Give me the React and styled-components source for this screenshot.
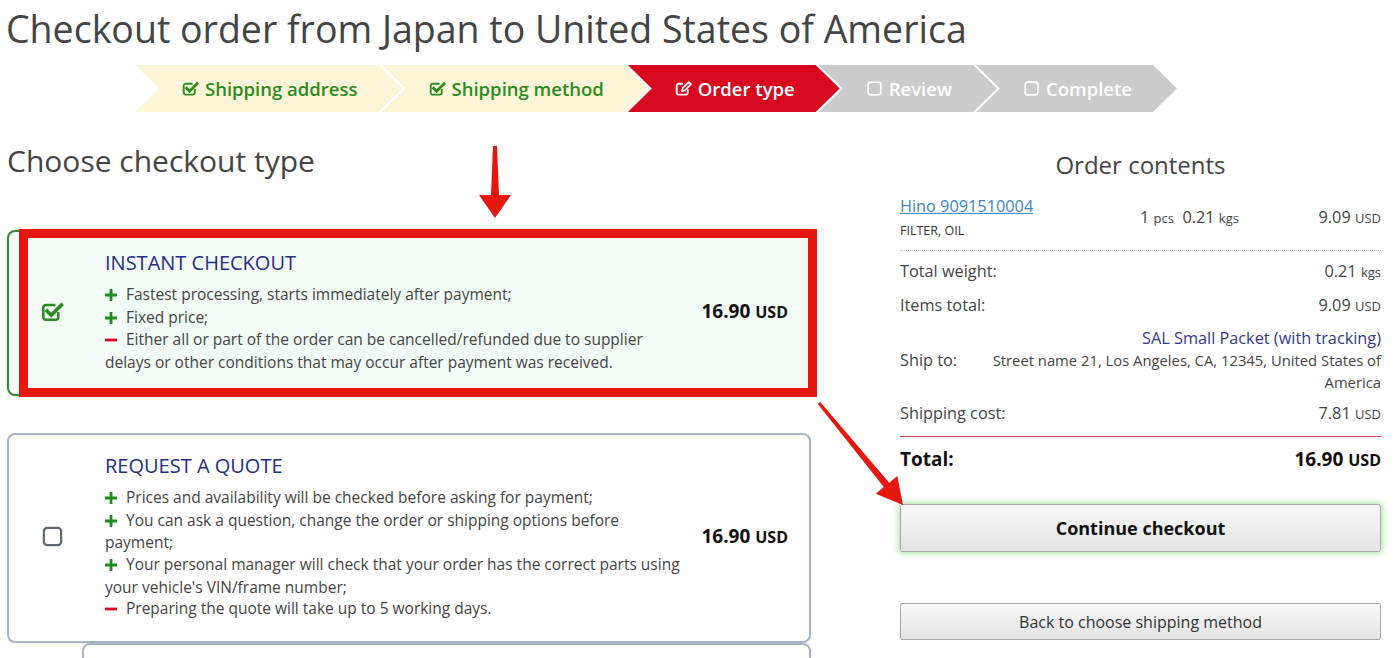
import React from 'react';
import styled, { createGlobalStyle } from 'styled-components';

const GlobalStyle = createGlobalStyle`
  html, body {
    margin: 0;
    padding: 0;
    background: #fff;
  }
  body {
    font-family: 'Open Sans', 'Liberation Sans', sans-serif;
    color: #444;
  }
`;

const steps = [
  { label: 'Shipping address', state: 'done' },
  { label: 'Shipping method', state: 'done' },
  { label: 'Order type', state: 'active' },
  { label: 'Review', state: 'todo' },
  { label: 'Complete', state: 'todo' },
];

const stepColors = {
  done: { bg: '#fdf5d8', fg: '#2c8a22' },
  active: { bg: '#d8091f', fg: '#fff' },
  todo: { bg: '#cbcbcb', fg: '#fff' },
};

const CheckSquareIcon = ({ size = 16 }) => (
  <svg width={size} height={size} viewBox="0 0 20 20" fill="none" stroke="currentColor">
    <path d="M15 10.5v4.5a2.2 2.2 0 0 1-2.2 2.2H4.2A2.2 2.2 0 0 1 2 15V6.6a2.2 2.2 0 0 1 2.2-2.2h8.3" strokeWidth="2.2" />
    <path d="M5.3 9.6l3.6 3.6 8.8-8.8" strokeWidth="3.2" strokeLinecap="square" />
  </svg>
);

const EditIcon = ({ size = 16 }) => (
  <svg width={size} height={size} viewBox="0 0 20 20" fill="none" stroke="currentColor">
    <path d="M15 11v4a2.2 2.2 0 0 1-2.2 2.2H4.2A2.2 2.2 0 0 1 2 15V6.6a2.2 2.2 0 0 1 2.2-2.2h5.3" strokeWidth="2.2" />
    <path d="M8 13.2l1-3.6 7.2-7.2 2.6 2.6-7.2 7.2z" strokeWidth="2" strokeLinejoin="round" />
  </svg>
);

const SquareIcon = ({ size = 16 }) => (
  <svg width={size} height={size} viewBox="0 0 20 20" fill="none" stroke="currentColor">
    <rect x="2.5" y="2.5" width="15" height="15" rx="3" strokeWidth="1.9" />
  </svg>
);

const Plus = () => (
  <svg width="12" height="12" viewBox="0 0 12 12">
    <path d="M4.6 0h2.8v4.6H12v2.8H7.4V12H4.6V7.4H0V4.6h4.6z" fill="#1f8a1f" />
  </svg>
);

const Minus = () => (
  <svg width="12" height="12" viewBox="0 0 12 12">
    <rect x="0" y="4.6" width="12" height="2.8" fill="#d60a22" />
  </svg>
);

const options = [
  {
    title: 'INSTANT CHECKOUT',
    selected: true,
    points: [
      ['+', 'Fastest processing, starts immediately after payment;'],
      ['+', 'Fixed price;'],
      ['-', 'Either all or part of the order can be cancelled/refunded due to supplier delays or other conditions that may occur after payment was received.'],
    ],
  },
  {
    title: 'REQUEST A QUOTE',
    selected: false,
    points: [
      ['+', 'Prices and availability will be checked before asking for payment;'],
      ['+', 'You can ask a question, change the order or shipping options before payment;'],
      ['+', "Your personal manager will check that your order has the correct parts using your vehicle's VIN/frame number;"],
      ['-', 'Preparing the quote will take up to 5 working days.'],
    ],
  },
];

export default function App() {
  return (
    <Page>
      <GlobalStyle />
      <Title>Checkout order from Japan to United States of America</Title>
      <StepBar>
        {steps.map((s) => (
          <Step key={s.label} $state={s.state}>
            {s.state === 'done' && <CheckSquareIcon size={17} />}
            {s.state === 'active' && <EditIcon size={17} />}
            {s.state === 'todo' && <SquareIcon size={17} />}
            {s.label}
          </Step>
        ))}
      </StepBar>

      <Main>
        <LeftColumn>
          <SectionTitle>Choose checkout type</SectionTitle>
          <CardList>
            {options.map((o) => (
              <CardWrap key={o.title}>
                <Card $selected={o.selected}>
                  <CheckCell $selected={o.selected}>
                    {o.selected ? <CheckSquareIcon size={23} /> : <SquareIcon size={23} />}
                  </CheckCell>
                  <CardBody>
                    <CardTitle>{o.title}</CardTitle>
                    {o.points.map(([sign, text]) => (
                      <Point key={text}>
                        <Sign>{sign === '+' ? <Plus /> : <Minus />}</Sign>
                        {text}
                      </Point>
                    ))}
                  </CardBody>
                  <Price>
                    16.90 <small>USD</small>
                  </Price>
                </Card>
                {o.selected && <Highlight />}
              </CardWrap>
            ))}
            <NextCard />
          </CardList>
        </LeftColumn>

        <RightColumn>
          <OrderTitle>Order contents</OrderTitle>
          <ItemRow>
            <div>
              <PartLink href="#">Hino 9091510004</PartLink>
              <PartName>FILTER, OIL</PartName>
            </div>
            <Qty>
              1 <Unit>pcs</Unit>&nbsp; 0.21 <Unit>kgs</Unit>
            </Qty>
            <Amount>
              9.09 <Unit>USD</Unit>
            </Amount>
          </ItemRow>
          <SumRow $first>
            <span>Total weight:</span>
            <Amount>
              0.21 <Unit>kgs</Unit>
            </Amount>
          </SumRow>
          <SumRow>
            <span>Items total:</span>
            <Amount>
              9.09 <Unit>USD</Unit>
            </Amount>
          </SumRow>
          <ShipBlock>
            <Method>SAL Small Packet (with tracking)</Method>
            <ShipTo>
              <span>Ship to:</span>
              <Address>Street name 21, Los Angeles, CA, 12345, United States of America</Address>
            </ShipTo>
          </ShipBlock>
          <SumRow $underline>
            <span>Shipping cost:</span>
            <Amount>
              7.81 <Unit>USD</Unit>
            </Amount>
          </SumRow>
          <TotalRow>
            <span>Total:</span>
            <span>
              16.90 <small>USD</small>
            </span>
          </TotalRow>
          <PrimaryButton type="button">Continue checkout</PrimaryButton>
          <SecondaryButton type="button">Back to choose shipping method</SecondaryButton>
        </RightColumn>
      </Main>

      <Annotations width="1398" height="658" viewBox="0 0 1398 658">
        <polygon points="493,146 497,146 499,195 511,195 495,218 479,195 491,195" fill="#e5170f" />
        <polygon
          points="817.8,404 820.2,402 889.2,482.7 897.3,476 903,505 875.7,493.8 883.8,487.1"
          fill="#e5170f"
        />
      </Annotations>
    </Page>
  );
}

const Page = styled.div`
  position: relative;
  height: 658px;
  overflow: hidden;
  padding: 5px 0 0 6px;
  box-sizing: border-box;
`;

const Title = styled.h1`
  margin: 0;
  font-size: 37.5px;
  line-height: 48px;
  font-weight: 400;
  color: #444;
`;

const StepBar = styled.div`
  display: flex;
  margin: 12px 0 0 129px;
`;

const Step = styled.div`
  display: flex;
  align-items: center;
  gap: 6px;
  height: 47px;
  padding: 0 45px 0 47px;
  margin-left: -21px;
  background: ${(p) => stepColors[p.$state].bg};
  color: ${(p) => stepColors[p.$state].fg};
  font-size: 18.5px;
  font-weight: 600;
  white-space: nowrap;
  clip-path: polygon(0 0, calc(100% - 24px) 0, 100% 50%, calc(100% - 24px) 100%, 0 100%, 24px 50%);

  &:first-child {
    margin-left: 0;
  }
`;

const Main = styled.div`
  display: flex;
  align-items: flex-start;
  margin-top: 31px;
`;

const LeftColumn = styled.div`
  width: 804px;
  padding-left: 1px;
`;

const SectionTitle = styled.h2`
  margin: 0;
  font-size: 30px;
  line-height: 36px;
  font-weight: 400;
  color: #444;
`;

const CardList = styled.div`
  display: flex;
  flex-direction: column;
  margin-top: 51px;
`;

const CardWrap = styled.div`
  position: relative;
  margin-bottom: 37px;

  &:nth-child(2) {
    margin-bottom: 0;
  }
`;

const Card = styled.div`
  display: grid;
  grid-template-columns: 96px 578px 1fr;
  align-items: center;
  border: 2px solid ${(p) => (p.$selected ? '#2f8a2f' : '#a8b3c1')};
  border-radius: 8px;
  background: ${(p) => (p.$selected ? '#f3fbf7' : '#fff')};
  padding: 17px 0 20px;
`;

const CheckCell = styled.div`
  display: flex;
  justify-content: center;
  padding-right: 10px;
  color: ${(p) => (p.$selected ? '#2c8a22' : '#5e6670')};
`;

const CardBody = styled.div`
  font-size: 15.5px;
  line-height: 21.7px;
  color: #444;
`;

const CardTitle = styled.div`
  font-size: 20px;
  line-height: 27px;
  color: #252d80;
  margin-bottom: 8px;
`;

const Point = styled.div``;

const Sign = styled.span`
  display: inline-block;
  width: 21px;
  vertical-align: -1px;
`;

const Price = styled.div`
  font-size: 19px;
  font-weight: 700;
  color: #111;
  text-align: right;
  padding-right: 21px;

  small {
    font-size: 16px;
  }
`;

const Highlight = styled.div`
  position: absolute;
  left: 12px;
  right: -6px;
  top: -1px;
  bottom: -1px;
  border: 9px solid #e5170f;
  pointer-events: none;
`;

const NextCard = styled.div`
  margin-left: 75px;
  height: 40px;
  border: 2px solid #a8b3c1;
  border-radius: 8px;
`;

const RightColumn = styled.div`
  width: 481px;
  margin-left: 89px;
  font-size: 16.3px;
  color: #444;
`;

const OrderTitle = styled.h3`
  margin: 7px 0 0;
  text-align: center;
  font-size: 24px;
  line-height: 29px;
  font-weight: 400;
  color: #444;
`;

const ItemRow = styled.div`
  display: grid;
  grid-template-columns: 240px 1fr auto;
  align-items: center;
  padding: 16px 0 11px;
  border-bottom: 1px dotted #b8b8b8;
`;

const PartLink = styled.a`
  display: block;
  color: #3d86c6;
  line-height: 22px;
`;

const PartName = styled.div`
  margin-top: 5px;
  font-size: 12.5px;
  line-height: 17px;
  color: #333;
`;

const Qty = styled.div`
  color: #444;
`;

const Unit = styled.span`
  font-size: 13px;
`;

const Amount = styled.span`
  text-align: right;
  color: #444;
`;

const SumRow = styled.div`
  display: flex;
  justify-content: space-between;
  align-items: center;
  height: 34px;
  line-height: 22px;
  padding-bottom: ${(p) => (p.$underline ? '6px' : '0')};
  border-bottom: ${(p) => (p.$underline ? '1.5px solid #d33f52' : 'none')};
  margin-top: ${(p) => (p.$underline || p.$first ? '3px' : '0')};
`;

const ShipBlock = styled.div`
  padding: 5px 0 0;
  line-height: 22px;
`;

const Method = styled.div`
  text-align: right;
  color: #333a8a;
`;

const ShipTo = styled.div`
  display: grid;
  grid-template-columns: 88px 1fr;
`;

const Address = styled.div`
  text-align: right;
  font-size: 14.8px;
`;

const TotalRow = styled.div`
  display: flex;
  justify-content: space-between;
  align-items: center;
  height: 44px;
  font-size: 19px;
  font-weight: 700;
  color: #111;

  small {
    font-size: 16px;
  }
`;

const ButtonBase = styled.button`
  display: block;
  width: 100%;
  border: 1px solid #a9a9a9;
  border-radius: 2px;
  background: linear-gradient(#f8f8f8, #e3e3e3);
  font-family: 'Open Sans', 'Liberation Sans', sans-serif;
  cursor: pointer;
`;

const PrimaryButton = styled(ButtonBase)`
  height: 48px;
  margin-top: 23px;
  font-size: 18px;
  font-weight: 700;
  color: #111;
  box-shadow: 0 0 7px 1px #9fe09a;
`;

const SecondaryButton = styled(ButtonBase)`
  height: 37px;
  margin-top: 51px;
  font-size: 16px;
  color: #333;
`;

const Annotations = styled.svg`
  position: absolute;
  top: 0;
  left: 0;
  pointer-events: none;
`;
